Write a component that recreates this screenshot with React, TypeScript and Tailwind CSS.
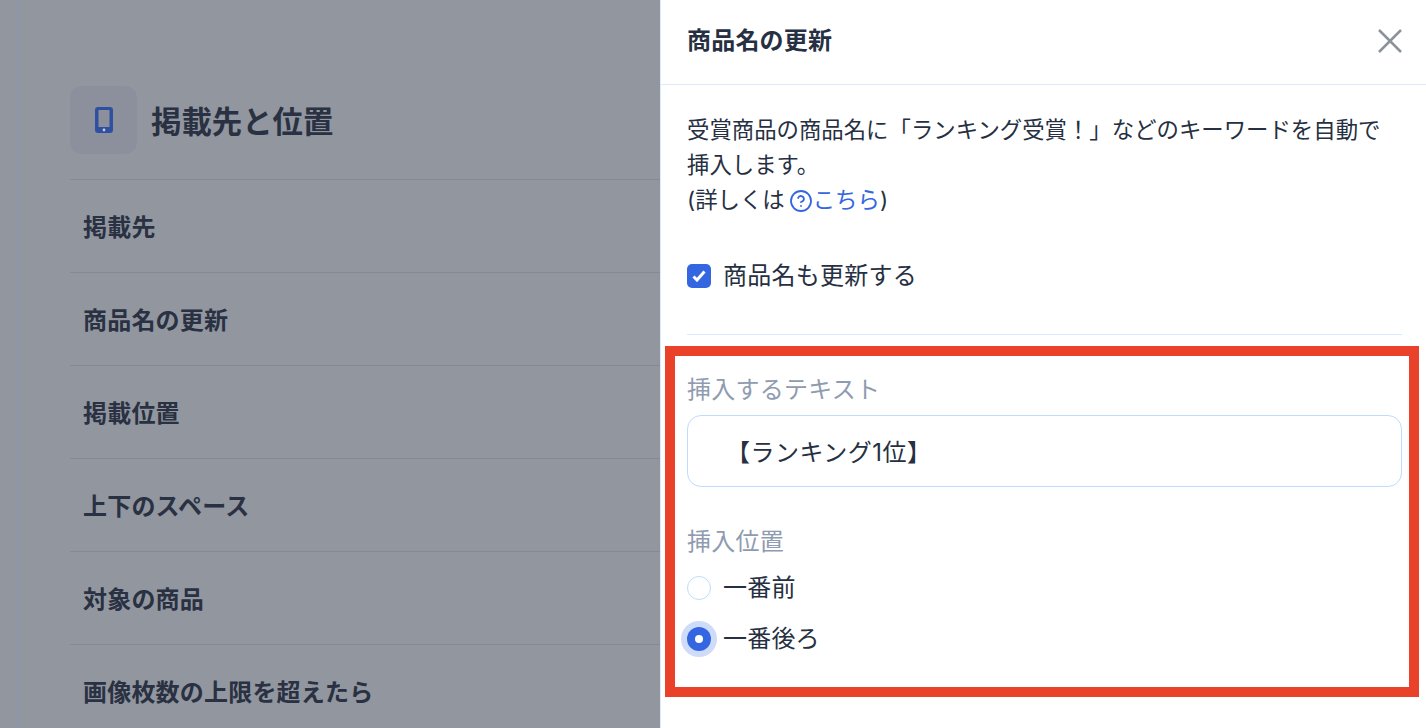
import { CircleHelp } from "lucide-react";

const ROWS = ["掲載先", "商品名の更新", "掲載位置", "上下のスペース", "対象の商品", "画像枚数の上限を超えたら"];

const FONT = "font-['Inter','Noto_Sans_CJK_JP',sans-serif]";

function Radio({ label, checked }: { label: string; checked?: boolean }) {
  return (
    <div className="flex h-[34px] items-center gap-3 text-[24px] leading-[34px] tracking-[0.2px] text-[#263042]">
      {checked ? (
        <span className="flex h-6 w-6 items-center justify-center rounded-full bg-[#3366e0] shadow-[0_0_0_6px_#cedbf9]">
          <span className="h-2 w-2 rounded-full bg-white" />
        </span>
      ) : (
        <span className="h-6 w-6 rounded-full border border-[#bfdbfe] bg-white" />
      )}
      {label}
    </div>
  );
}

export default function App() {
  return (
    <main className={`flex h-[728px] w-[1426px] overflow-hidden bg-[#92969f] ${FONT}`}>
      {/* ── Page behind the drawer ── */}
      <div className="flex w-[660px] shrink-0">
        <div className="w-[19px] shrink-0 border-r border-[#849ab6]" />
        <section className="ml-[51px] flex-1 pt-[86px]">
          <div className="mb-[25px] flex items-center gap-[14px]">
            <div className="flex h-[68px] w-[67px] items-center justify-center rounded-xl bg-[#8b909c]">
              <svg width="18" height="26" viewBox="0 0 18 26" className="text-[#2f50a0]">
                <path
                  fill="currentColor"
                  fillRule="evenodd"
                  d="M3 0h12a3 3 0 0 1 3 3v20a3 3 0 0 1-3 3H3a3 3 0 0 1-3-3V3a3 3 0 0 1 3-3Zm.5 3v17h11V3h-11Z"
                />
                <circle cx="9" cy="23" r="1.4" fill="#c3cad8" />
              </svg>
            </div>
            <h1 className="pt-1 text-[30.4px] leading-[40px] font-bold text-[#293142]">掲載先と位置</h1>
          </div>
          {ROWS.map((row) => (
            <div
              key={row}
              className="flex h-[93px] items-center border-t border-[#838a97] pt-1 pl-[13px] text-[24px] font-bold tracking-[0.2px] text-[#293142]"
            >
              {row}
            </div>
          ))}
        </section>
      </div>

      {/* ═══ Drawer ═══ */}
      <aside className="flex-1 border-l border-[#dbeafe] bg-white">
        <header className="flex h-[85px] items-center justify-between border-b border-[#dbeafe] pr-6 pb-[3px] pl-[26px]">
          <h2 className="text-[24px] font-bold tracking-[0.2px] text-[#263042]">商品名の更新</h2>
          <svg width="24" height="24" viewBox="0 0 24 24" fill="none" stroke="#8b929c" strokeWidth="2.5">
            <path d="M1 1l22 22M23 1L1 23" />
          </svg>
        </header>

        <div className="pt-[27px] pr-6 pl-[26px]">
          <p className="text-[22.4px] leading-[35px] text-[#263042]">
            受賞商品の商品名に「ランキング受賞！」などのキーワードを自動で
            <br />
            挿入します。
            <br />
            (詳しくは
            <span className="ml-[4px] text-[#3366e0]">
              <CircleHelp size={24} strokeWidth={1.8} className="inline-block align-[-5px]" />
              こちら
            </span>
            )
          </p>

          <label className="mt-[47px] flex h-6 items-center gap-3 text-[24px] tracking-[0.25px] text-[#263042]">
            <span className="flex h-6 w-6 items-center justify-center rounded-[5px] bg-[#3366e0]">
              <svg width="14" height="12" viewBox="0 0 14 12" fill="none" stroke="white" strokeWidth="3">
                <path d="M1.5 6.5 5 10l7.5-8.5" />
              </svg>
            </span>
            商品名も更新する
          </label>

          <div className="mt-[46px] h-px bg-[#dbeafe]" />

          {/* ── Highlighted area ── */}
          <div className="mt-[11px] -mr-[17px] -ml-[22px] border-[10px] border-[#ea412a] pt-[17px] pr-[7px] pb-[31px] pl-3">
            <div className="text-[24px] leading-[34px] tracking-[0.25px] text-[#8f9bb0]">挿入するテキスト</div>
            <input
              readOnly
              value="【ランキング1位】"
              className={`mt-2 block h-[72px] w-full rounded-[14px] border border-[#bfdbfe] pb-0.5 pl-[38px] text-[24px] tracking-[0.5px] text-[#263042] outline-none ${FONT}`}
            />
            <div className="mt-[38px] text-[24px] leading-[34px] tracking-[0.25px] text-[#8f9bb0]">挿入位置</div>
            <div className="mt-3 flex flex-col gap-[17px]">
              <Radio label="一番前" />
              <Radio label="一番後ろ" checked />
            </div>
          </div>
        </div>
      </aside>
    </main>
  );
}
